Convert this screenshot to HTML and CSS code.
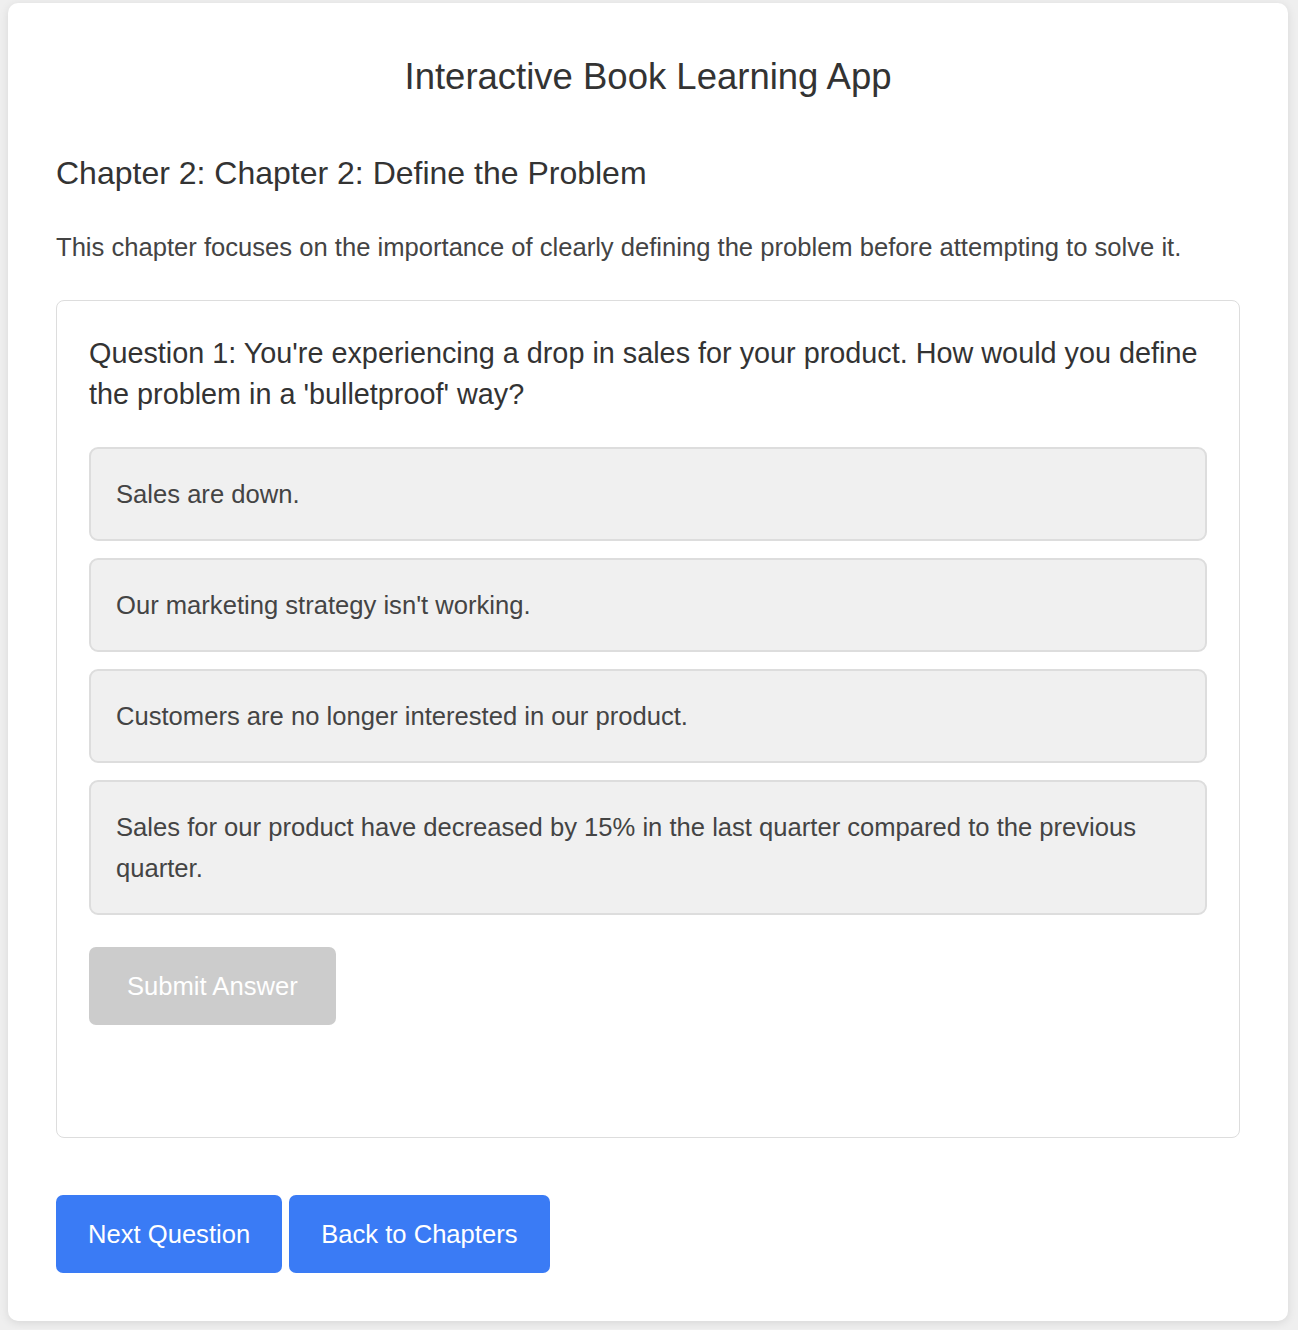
FILE: index.html
```html
<!DOCTYPE html>
<html lang="en">
<head>
<meta charset="utf-8">
<title>Interactive Book Learning App</title>
<link rel="stylesheet" href="styles.css">
</head>
<body>
  <div class="app">
    <h1 class="app-title">Interactive Book Learning App</h1>
    <h2 class="chapter-title">Chapter 2: Chapter 2: Define the Problem</h2>
    <p class="chapter-desc">This chapter focuses on the importance of clearly defining the problem before attempting to solve it.</p>

    <div class="question-box">
      <p class="question-text">Question 1: You're experiencing a drop in sales for your product. How would you define the problem in a 'bulletproof' way?</p>
      <div class="options">
        <div class="option">Sales are down.</div>
        <div class="option">Our marketing strategy isn't working.</div>
        <div class="option">Customers are no longer interested in our product.</div>
        <div class="option">Sales for our product have decreased by 15% in the last quarter compared to the previous quarter.</div>
      </div>
      <button class="btn btn-submit" disabled>Submit Answer</button>
      <div class="feedback"></div>
    </div>

    <div class="nav">
      <button class="btn btn-primary">Next Question</button>
      <button class="btn btn-primary">Back to Chapters</button>
    </div>
  </div>
</body>
</html>
```

FILE: styles.css
```css
html, body {
  margin: 0;
  padding: 0;
}

body {
  background: #efefef;
  font-family: "Liberation Sans", Arial, Helvetica, sans-serif;
  color: #333;
  font-size: 25.6px;
  line-height: 41px;
  padding: 3px 0 8px;
}

.app {
  width: 1280px;
  box-sizing: border-box;
  margin-left: 8px;
  background: #fff;
  border-radius: 10px;
  box-shadow: 0 2px 10px rgba(0, 0, 0, 0.1);
  padding: 48px;
}

.app-title {
  margin: 0 0 49px;
  font-size: 36.5px;
  line-height: 52px;
  font-weight: normal;
  text-align: center;
  color: #333;
}

.chapter-title {
  margin: 0 0 33px;
  font-size: 32px;
  line-height: 42px;
  font-weight: normal;
  color: #333;
}

.chapter-desc {
  margin: 0 0 32px;
  font-size: 25.6px;
  line-height: 41px;
  color: #444;
}

.question-box {
  border: 1px solid #ddd;
  border-radius: 8px;
  padding: 32px;
}

.question-text {
  margin: 0 0 32px;
  font-size: 28.8px;
  line-height: 41px;
  color: #333;
}

.options {
  display: flex;
  flex-direction: column;
  gap: 17px;
  margin-bottom: 32px;
}

.option {
  background: #f0f0f0;
  border: 2px solid #ddd;
  border-radius: 9px;
  padding: 24.5px 25px;
  font-size: 25.6px;
  line-height: 41px;
  color: #444;
}

.btn {
  display: inline-flex;
  align-items: center;
  justify-content: center;
  height: 78px;
  border: none;
  border-radius: 7px;
  font-family: "Liberation Sans", Arial, Helvetica, sans-serif;
  font-size: 25.6px;
  line-height: 28px;
  color: #fff;
  cursor: pointer;
}

.btn-submit {
  background: #ccc;
  padding: 0 38px;
  cursor: not-allowed;
}

.feedback {
  height: 80px;
}

.nav {
  display: flex;
  gap: 7px;
  margin-top: 57px;
}

.btn-primary {
  background: #3a7bf5;
  padding: 0 32px;
}
```
